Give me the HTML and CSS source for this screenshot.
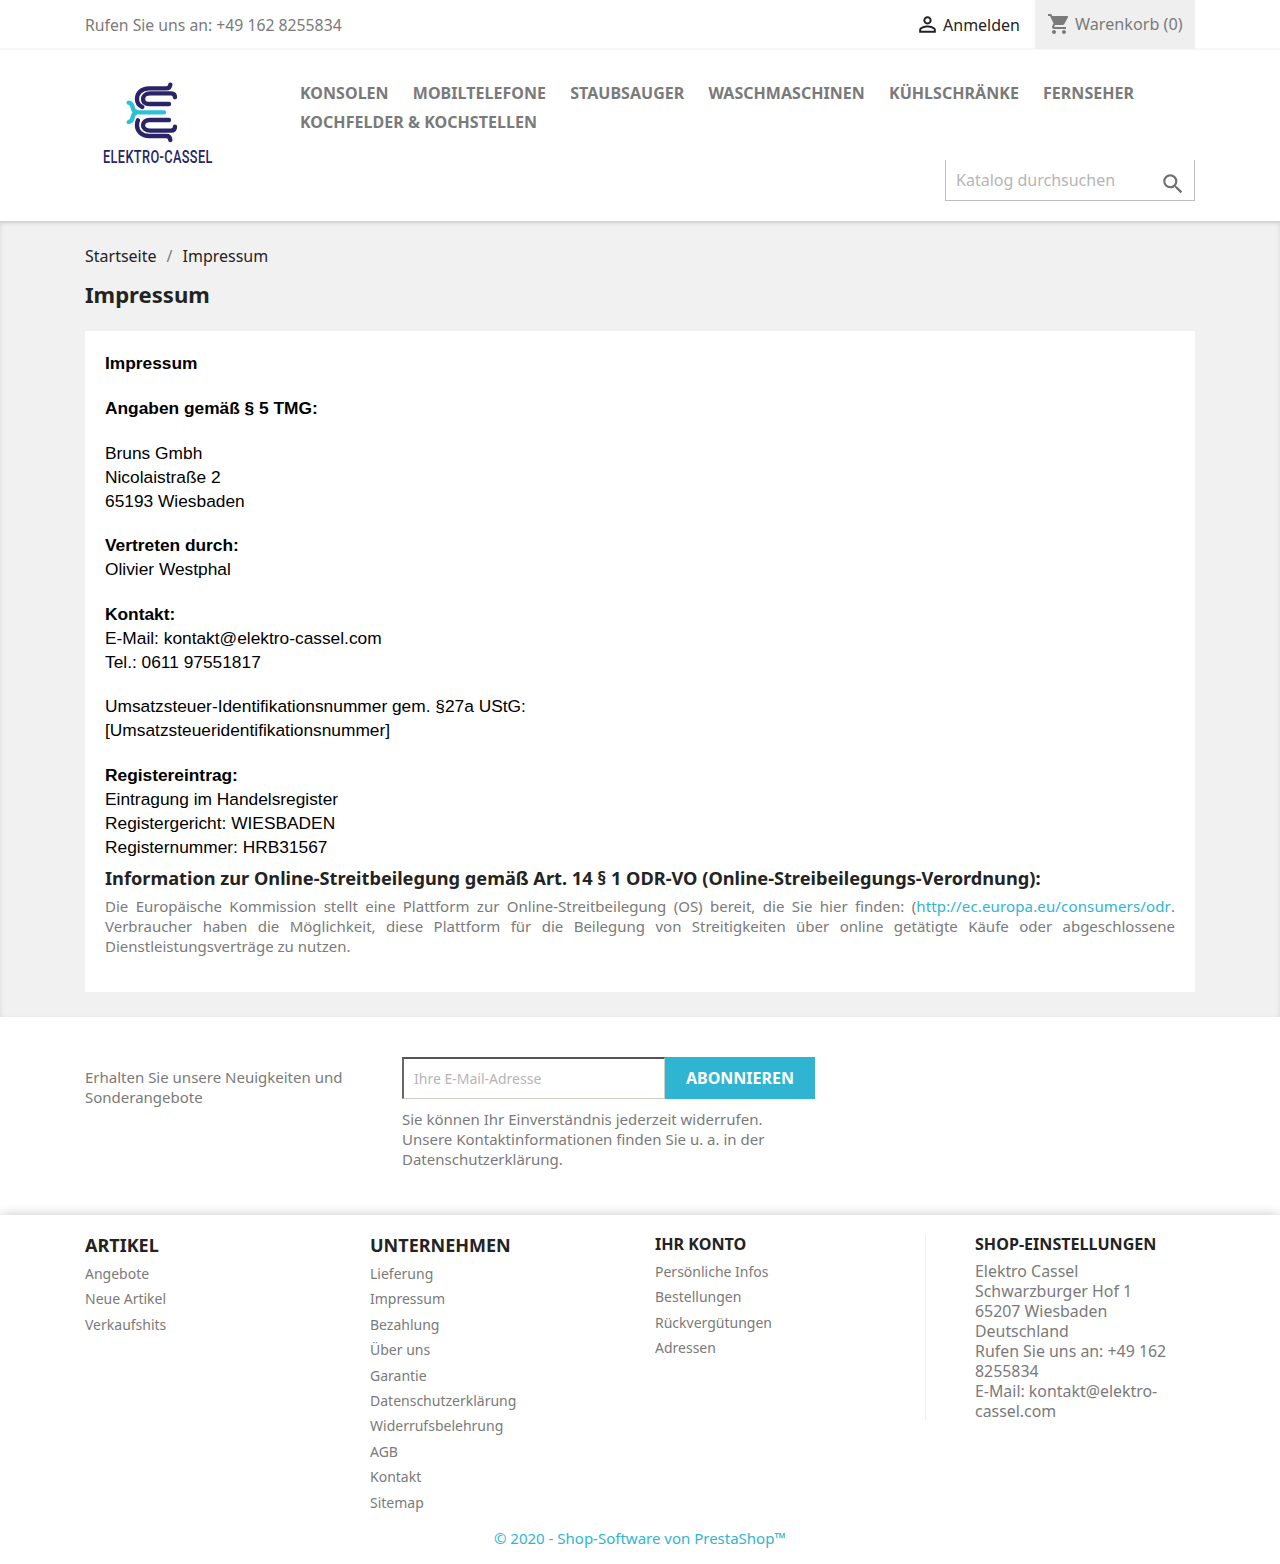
FILE: index.html
```html
<!DOCTYPE html>
<html lang="de">
<head>
<meta charset="utf-8">
<title>Impressum</title>
<link rel="stylesheet" href="styles.css">
</head>
<body>
<header class="site-header">
  <div class="topbar">
    <div class="container topbar-inner">
      <div class="phone">Rufen Sie uns an: +49 162 8255834</div>
      <div class="top-actions">
        <a class="signin"><svg class="icon-user" viewBox="0 0 24 24" width="25" height="25"><path fill="#232323" d="M12 5.9a2.1 2.1 0 1 1 0 4.2 2.1 2.1 0 0 1 0-4.2m0 9c2.97 0 6.1 1.46 6.1 2.1v1.1H5.9V17c0-.64 3.13-2.1 6.1-2.1M12 4C9.79 4 8 5.79 8 8s1.79 4 4 4 4-1.79 4-4-1.79-4-4-4zm0 9c-2.67 0-8 1.34-8 4v3h16v-3c0-2.66-5.33-4-8-4z"/></svg><span>Anmelden</span></a>
        <a class="cart"><svg class="icon-cart" viewBox="0 0 24 24" width="24" height="24"><path fill="#7a7a7a" d="M7 18c-1.1 0-1.99.9-1.99 2S5.9 22 7 22s2-.9 2-2-.9-2-2-2zM1 2v2h2l3.6 7.59-1.35 2.45c-.16.28-.25.61-.25.96 0 1.1.9 2 2 2h12v-2H7.42c-.14 0-.25-.11-.25-.25l.03-.12.9-1.63h7.45c.75 0 1.41-.41 1.75-1.03l3.58-6.49A1 1 0 0 0 20 4H5.21l-.94-2H1zm16 16c-1.1 0-1.99.9-1.99 2s.89 2 1.99 2 2-.9 2-2-.9-2-2-2z"/></svg><span>Warenkorb (0)</span></a>
      </div>
    </div>
  </div>
  <div class="container brandbar">
    <a class="logo">
      <svg viewBox="130 60 170 190" width="56.67" height="63.33">
        <g fill="none" stroke-linecap="round" stroke-linejoin="round" stroke-width="13">
          <path stroke="#2a2466" d="M272 74c-1 8-5 11-12 11H208c-22 0-36 14-36 32 0 12 6 20 16 24"/>
          <path stroke="#2a2466" d="M286 112c0-8-5-12-12-12H212c-14 0-22 8-22 17 0 10 8 15 20 15h58"/>
          <path stroke="#2a2466" d="M272 240c-1-8-5-12-12-12H208c-22 0-36-14-36-32 0-6 1-11 3-15"/>
          <path stroke="#2a2466" d="M286 200c0 8-5 12-12 12H212c-14 0-22-7-22-16 0-10 8-16 20-16h58"/>
          <path stroke="#2ec0d6" d="M147 128c8 2 11 7 12 14 1 10 6 15 18 15h76"/>
          <path stroke="#2ec0d6" d="M147 186c8-2 11-7 12-14 1-6 4-12 12-15"/>
        </g>
      </svg>
      <span class="logo-name">ELEKTRO-CASSEL</span>
    </a>
    <div class="nav-col">
      <nav class="menu">
        <a>Konsolen</a><a>Mobiltelefone</a><a>Staubsauger</a><a>Waschmaschinen</a><a>Kühlschränke</a><a>Fernseher</a><a>Kochfelder &amp; Kochstellen</a>
      </nav>
      <div class="search">
        <span class="search-ph">Katalog durchsuchen</span>
        <svg viewBox="0 0 24 24" width="26" height="26"><path fill="#6f6f6f" d="M15.5 14h-.79l-.28-.27A6.47 6.47 0 0 0 16 9.5 6.5 6.5 0 1 0 9.5 16c1.61 0 3.09-.59 4.23-1.57l.27.28v.79l5 4.99L20.49 19l-4.99-5zm-6 0C7.01 14 5 11.99 5 9.5S7.01 5 9.5 5 14 7.01 14 9.5 11.99 14 9.5 14z"/></svg>
      </div>
    </div>
  </div>
</header>

<main class="main">
  <div class="container">
    <ol class="breadcrumb"><li>Startseite</li><li class="sep">/</li><li>Impressum</li></ol>
    <h1 class="page-title">Impressum</h1>
    <section class="card">
      <p class="legal"><b>Impressum</b></p>
      <p class="legal"><b>Angaben gemäß § 5 TMG:</b></p>
      <p class="legal">Bruns Gmbh<br>Nicolaistraße 2<br>65193 Wiesbaden</p>
      <p class="legal"><b>Vertreten durch:</b><br>Olivier Westphal</p>
      <p class="legal"><b>Kontakt:</b><br>E-Mail: kontakt@elektro-cassel.com<br>Tel.: 0611 97551817</p>
      <p class="legal">Umsatzsteuer-Identifikationsnummer gem. §27a UStG:<br>[Umsatzsteueridentifikationsnummer]</p>
      <p class="legal last"><b>Registereintrag:</b><br>Eintragung im Handelsregister<br>Registergericht: WIESBADEN<br>Registernummer: HRB31567</p>
      <h3 class="odr-title">Information zur Online-Streitbeilegung gemäß Art. 14 § 1 ODR-VO (Online-Streibeilegungs-Verordnung):</h3>
      <p class="odr">Die Europäische Kommission stellt eine Plattform zur Online-Streitbeilegung (OS) bereit, die Sie hier finden: (<a>http://ec.europa.eu/consumers/odr</a>. Verbraucher haben die Möglichkeit, diese Plattform für die Beilegung von Streitigkeiten über online getätigte Käufe oder abgeschlossene Dienstleistungsverträge zu nutzen.</p>
    </section>
  </div>
</main>

<section class="newsletter">
  <div class="container newsletter-inner">
    <p class="nl-label">Erhalten Sie unsere Neuigkeiten und Sonderangebote</p>
    <div class="nl-form">
      <div class="nl-row">
        <div class="nl-input">Ihre E-Mail-Adresse</div>
        <div class="nl-btn">ABONNIEREN</div>
      </div>
      <p class="nl-note">Sie können Ihr Einverständnis jederzeit widerrufen. Unsere Kontaktinformationen finden Sie u. a. in der Datenschutzerklärung.</p>
    </div>
  </div>
</section>

<footer class="footer">
  <div class="container footer-cols">
    <div class="col col-a">
      <h4 class="col-big">ARTIKEL</h4>
      <ul><li>Angebote</li><li>Neue Artikel</li><li>Verkaufshits</li></ul>
    </div>
    <div class="col col-b">
      <h4 class="col-big">UNTERNEHMEN</h4>
      <ul><li>Lieferung</li><li>Impressum</li><li>Bezahlung</li><li>Über uns</li><li>Garantie</li><li>Datenschutzerklärung</li><li>Widerrufsbelehrung</li><li>AGB</li><li>Kontakt</li><li>Sitemap</li></ul>
    </div>
    <div class="col col-c">
      <h4 class="col-small">IHR KONTO</h4>
      <ul><li>Persönliche Infos</li><li>Bestellungen</li><li>Rückvergütungen</li><li>Adressen</li></ul>
    </div>
    <div class="col col-d">
      <h4 class="col-small">SHOP-EINSTELLUNGEN</h4>
      <p class="shop">Elektro Cassel<br>Schwarzburger Hof 1<br>65207 Wiesbaden<br>Deutschland<br>Rufen Sie uns an: +49 162 8255834<br>E-Mail: kontakt@elektro-cassel.com</p>
    </div>
  </div>
  <p class="copyright">© 2020 - Shop-Software von PrestaShop™</p>
</footer>
</body>
</html>
```
FILE: styles.css
```css
* { box-sizing: border-box; }
html, body { margin: 0; padding: 0; }
body { font-family: "Noto Sans", sans-serif; font-size: 16px; color: #7a7a7a; background: #fff; }
a { color: inherit; text-decoration: none; }
p, h1, h3, h4, ul, ol { margin: 0; padding: 0; }
ul, ol { list-style: none; }
.container { width: 1110px; margin: 0 auto; }

.site-header { height: 221px; background: #fff; position: relative; box-shadow: 0 1px 3px rgba(0,0,0,.08); }
.topbar { height: 50px; border-bottom: 2px solid #f6f6f6; }
.topbar-inner { display: flex; justify-content: space-between; align-items: flex-start; }
.phone { font-size: 15.75px; line-height: 50px; }
.top-actions { display: flex; align-items: flex-start; }
.signin { display: flex; align-items: center; gap: 3px; height: 49px; color: #232323; font-size: 16px; margin-right: 15px; }
.cart { display: flex; align-items: center; gap: 4px; height: 49px; width: 160px; background: #efefef; padding: 0 0 2px 12px; font-size: 16.2px; }

.brandbar { display: flex; position: relative; }
.logo { display: block; width: 215px; padding: 30px 0 0 38.33px; position: relative; flex: none; }
.logo svg { display: block; }
.logo-name { display: block; position: absolute; left: 18px; top: 96px; font-family: "Roboto", sans-serif; font-size: 18px; font-weight: 500; color: #2a2466; transform: scaleX(.71); transform-origin: left; white-space: nowrap; letter-spacing: .5px; }
.nav-col { flex: 1; }
.menu { display: flex; flex-wrap: wrap; column-gap: 24.1px; padding-top: 29px; }
.menu a { font-size: 16px; letter-spacing: .04px; line-height: 29px; font-weight: 700; color: #7a7a7a; text-transform: uppercase; white-space: nowrap; }
.search { width: 250px; height: 41px; margin: 23px 0 0 auto; border: 1px solid #bdbdbd; border-top: 0; display: flex; justify-content: space-between; align-items: center; padding: 0 8px 0 10px; }
.search-ph { color: #b5b5b5; font-size: 16px; }
.search svg { margin-top: 8px; }

.main { background: #f1f1f1; height: 796px; padding-top: 25px; box-shadow: inset 0 2px 5px rgba(0,0,0,.11); }
.breadcrumb { display: flex; font-size: 16px; line-height: 20px; color: #232323; gap: 10px; }
.breadcrumb .sep { color: #7a7a7a; }
.page-title { font-size: 22.1px; line-height: 30px; font-weight: 700; color: #232323; margin-top: 13px; }
.card { background: #fff; margin-top: 22px; height: 661px; padding: 20.4px 20px 20px; }
.legal { font-family: "Liberation Sans", sans-serif; font-size: 17.33px; line-height: 24px; color: #000; margin-bottom: 20.6px; }
.legal.last { margin-bottom: 6px; }
.odr-title { font-size: 18.2px; line-height: 26px; font-weight: 700; color: #232323; }
.odr { font-size: 15px; line-height: 20px; color: #7a7a7a; text-align: justify; margin-top: 5px; }
.odr a { color: #2fb5d2; letter-spacing: .15px; }

.newsletter { height: 198px; padding-top: 40px; }
.newsletter-inner { display: flex; }
.nl-label { width: 317px; font-size: 15px; line-height: 20px; padding: 10px 40px 0 0; }
.nl-form { width: 413px; }
.nl-row { display: flex; height: 42px; }
.nl-input { width: 263px; height: 42px; border: 1px solid #d0cfc2; border-top: 2px solid #555; border-left: 2px solid #666; color: #b5b5b5; font-size: 14px; line-height: 40px; padding-left: 10px; }
.nl-btn { flex: 1; background: #2fb5d2; color: #fff; font-weight: 700; font-size: 16px; line-height: 42px; text-align: center; }
.nl-note { font-size: 15px; line-height: 20px; margin-top: 10px; }

.footer { position: relative; background: #fff; box-shadow: 0 0 11px rgba(0,0,0,.22); height: 349px; padding-top: 20px; }
.footer-cols { display: flex; height: 292px; }
.col { flex: none; }
.col-a, .col-b { width: 285px; }
.col-c { width: 271px; border-right: 1px solid #eee; height: 185px; }
.col-d { width: 269px; padding-left: 49px; }
.col-big { font-size: 18px; line-height: 22px; font-weight: 700; color: #232323; margin: -1px 0 5px; }
.col-small { font-size: 16.1px; line-height: 18px; font-weight: 700; color: #232323; margin-bottom: 6px; }
.col-d .col-small { margin-bottom: 8px; }
.col li { font-size: 14px; line-height: 25.4px; }
.shop { font-size: 15.9px; line-height: 20px; }
.copyright { text-align: center; color: #2fb5d2; font-size: 15px; line-height: 20px; margin-top: 1px; }
```
